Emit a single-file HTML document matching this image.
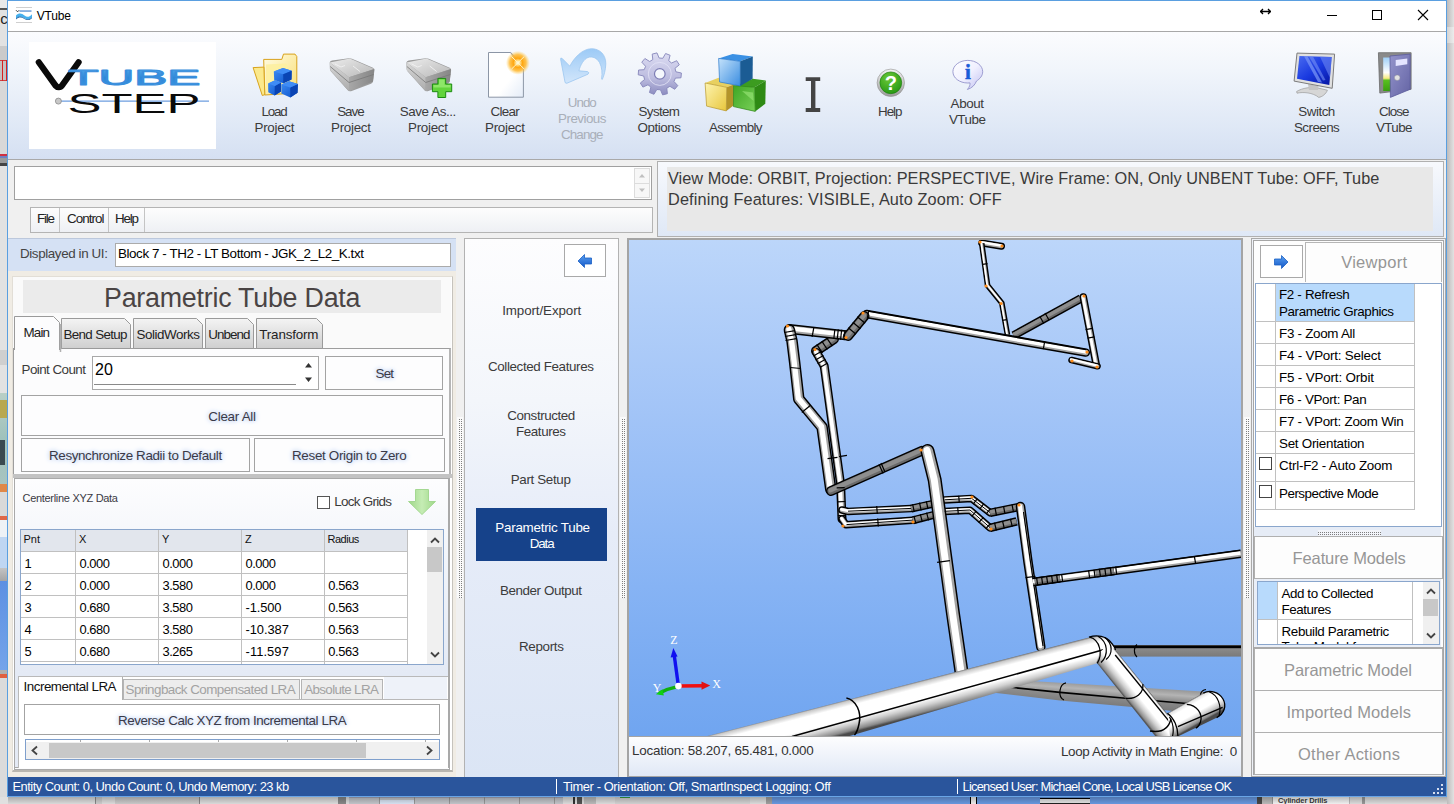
<!DOCTYPE html>
<html lang="en"><head><meta charset="utf-8"><title>VTube</title>
<style>
html,body{margin:0;padding:0;background:#e2e2e2;}
body{width:1454px;height:804px;overflow:hidden;font-family:"Liberation Sans",sans-serif;}
#root{position:relative;width:1454px;height:804px;overflow:hidden;}
.abs{position:absolute;}
.t{position:absolute;white-space:pre;line-height:1;font-family:"Liberation Sans",sans-serif;}
.btn{box-sizing:border-box;border:1px solid #a3a3a3;background:#fdfdfe;}
.hl{height:1px;background:#c0c0c0;}
.vl{width:1px;background:#c0c0c0;}
.dotsv{background-image:radial-gradient(circle,#8e8e8e 0.7px,transparent 0.9px);background-size:2px 2px;}
.dotsh{background-image:radial-gradient(circle,#8e8e8e 0.7px,transparent 0.9px);background-size:2px 2px;}

</style></head>
<body>
<div id="root">
<!-- desktop background strips -->
<div class="abs" style="left:0;top:0;width:1454px;height:804px;background:#e2e2e2"></div>
<div class="abs" style="left:0;top:0;width:8px;height:8px;background:#e9e9e9"></div>
<div class="abs" style="left:0;top:8px;width:8px;height:2px;background:#555"></div>
<span class="t" style="left:-3px;top:11px;font-size:15px;color:#222">ic</span>
<div class="abs" style="left:0;top:46px;width:8px;height:14px;background:#cacaca"></div>
<div class="abs" style="left:0;top:60px;width:8px;height:21px;background:#c6c2c2;border-top:1px solid #d04040;border-bottom:1px solid #d04040;box-sizing:border-box"></div>
<div class="abs" style="left:2px;top:60px;width:1px;height:21px;background:#d82020"></div>
<div class="abs" style="left:6px;top:60px;width:1px;height:21px;background:#d82020"></div>
<div class="abs" style="left:0;top:81px;width:8px;height:73px;background:#d8d8d8"></div>
<div class="abs" style="left:0;top:154px;width:8px;height:2px;background:#d03040"></div>
<div class="abs" style="left:0;top:156px;width:8px;height:2px;background:#7080c0"></div>
<div class="abs" style="left:0;top:158px;width:8px;height:5px;background:#9a9a9a"></div>
<div class="abs" style="left:0;top:163px;width:8px;height:3px;background:#444"></div>
<div class="abs" style="left:0;top:350px;width:8px;height:15px;background:#cfcfcf"></div>
<div class="abs" style="left:0;top:393px;width:8px;height:91px;background:linear-gradient(#b9cfc6,#9fc2bc 50%,#a8c4c0)"></div>
<div class="abs" style="left:0;top:400px;width:8px;height:18px;background:#b8a850"></div>
<div class="abs" style="left:0;top:440px;width:5px;height:25px;background:#3a4a50"></div>
<div class="abs" style="left:0;top:484px;width:8px;height:8px;background:#e08848"></div>
<div class="abs" style="left:0;top:492px;width:8px;height:24px;background:#d9d9d9"></div>
<div class="abs" style="left:0;top:516px;width:8px;height:4px;background:#e06848"></div>
<div class="abs" style="left:0;top:520px;width:8px;height:17px;background:#eef2f6"></div>
<div class="abs" style="left:0;top:537px;width:8px;height:31px;background:#bfd6f2"></div>
<div class="abs" style="left:0;top:568px;width:8px;height:13px;background:linear-gradient(#c4c4c4,#a4a4a4)"></div>
<div class="abs" style="left:0;top:581px;width:8px;height:89px;background:linear-gradient(#5d90e2,#74a4ea)"></div>
<div class="abs" style="left:0;top:670px;width:8px;height:4px;background:#b0b0b0"></div>
<div class="abs" style="left:0;top:674px;width:8px;height:4px;background:#e06040"></div>
<div class="abs" style="left:0;top:678px;width:8px;height:126px;background:#dbdbdb"></div>
<!-- bottom strip -->
<div class="abs" style="left:0;top:797px;width:1454px;height:7px;background:#e0e0e0"></div>
<div class="abs" style="left:95px;top:797px;width:6px;height:7px;background:#d0d0d0;border-left:1px solid #8a8a8a"></div>
<div class="abs" style="left:115px;top:797px;width:84px;height:7px;background:#cdcdcd;border-right:1px solid #8a8a8a"></div>
<div class="abs" style="left:338px;top:797px;width:8px;height:7px;background:#8a8a8a"></div>
<div class="abs" style="left:349px;top:797px;width:214px;height:7px;background:#c6c8cd;border-top:1px solid #aab"></div>
<div class="abs" style="left:379px;top:800px;width:35px;height:4px;background:#dbe6f6"></div>
<div class="abs" style="left:379px;top:797px;width:1px;height:7px;background:#9a9a9a"></div>
<div class="abs" style="left:414px;top:797px;width:1px;height:7px;background:#9a9a9a"></div>
<div class="abs" style="left:449px;top:797px;width:1px;height:7px;background:#9a9a9a"></div>
<div class="abs" style="left:484px;top:797px;width:1px;height:7px;background:#9a9a9a"></div>
<div class="abs" style="left:519px;top:797px;width:1px;height:7px;background:#9a9a9a"></div>
<div class="abs" style="left:554px;top:797px;width:1px;height:7px;background:#9a9a9a"></div>
<div class="abs" style="left:573px;top:797px;width:2px;height:7px;background:#333"></div>
<div class="abs" style="left:577px;top:797px;width:5px;height:7px;background:#555"></div>
<div class="abs" style="left:584px;top:797px;width:12px;height:7px;background:#bdbdbd"></div>
<div class="abs" style="left:615px;top:797px;width:135px;height:7px;background:#d6d6d6"></div>
<div class="abs" style="left:620px;top:797px;width:10px;height:1px;background:#3aa040"></div>
<div class="abs" style="left:766px;top:797px;width:6px;height:7px;background:#a2a2a2"></div>
<div class="abs" style="left:772px;top:797px;width:485px;height:7px;background:#6a9be4"></div>
<div class="abs" style="left:970px;top:797px;width:5px;height:7px;background:#f0f0f0;border-left:1px solid #000;border-right:1px solid #000"></div>
<div class="abs" style="left:1040px;top:798px;width:50px;height:4px;background:#e8e8e8;border-top:1px solid #000;border-bottom:1px solid #222"></div>
<div class="abs" style="left:1257px;top:797px;width:5px;height:7px;background:#4a4a4a"></div>
<div class="abs" style="left:1262px;top:797px;width:10px;height:7px;background:#bdbdbd"></div>
<div class="abs" style="left:1272px;top:797px;width:76px;height:7px;background:#f6f6f6;border-left:1px solid #999;border-right:1px solid #bbb"></div>
<div class="abs" style="left:1362px;top:797px;width:3px;height:7px;background:#9a9a9a"></div>
<span class="t" style="left:1278px;top:796.5px;font-size:7.5px;font-weight:bold;color:#3a3a3a;letter-spacing:-0.1px">Cylinder Drills</span>
<!-- shadows -->
<div class="abs" style="left:8px;top:797px;width:1446px;height:7px;background:linear-gradient(rgba(0,0,0,.24),rgba(0,0,0,.03))"></div>
<div class="abs" style="left:1447px;top:0;width:7px;height:804px;background:linear-gradient(90deg,#bdbbbb,#e2e2e2)"></div>
<div class="abs" style="left:1447px;top:27px;width:7px;height:16px;background:linear-gradient(90deg,#d4d4d4,#ececec)"></div>
<!-- window -->
<div class="abs" id="win" style="left:7px;top:0;width:1440px;height:797px;background:#f0f0f0;box-sizing:border-box;border:1px solid #5a9fe0;border-bottom-color:#6aa5e6"></div>
<!-- title bar -->
<div class="abs" style="left:8px;top:1px;width:1438px;height:30px;background:#fff"></div>
<div class="abs" style="left:8px;top:31px;width:1438px;height:1px;background:#a8a8a8"></div>
<!-- toolbar -->
<div class="abs" style="left:8px;top:32px;width:1438px;height:127px;background:linear-gradient(#fbfcfe 0%,#f1f5fb 30%,#dfe8f6 75%,#d5e0f2 100%)"></div>
<div class="abs" style="left:8px;top:159px;width:1438px;height:1px;background:#a9a9a9"></div>
<!-- logo box -->
<div class="abs" style="left:29px;top:42px;width:187px;height:107px;background:#fff"></div>
<!-- row 2 -->
<div class="abs" style="left:14px;top:166px;width:638px;height:34px;background:#fff;box-sizing:border-box;border:1px solid #a0a0a0"></div>
<div class="abs" style="left:634px;top:168px;width:16px;height:30px;background:#f7f7f7;box-sizing:border-box;border:1px solid #dcdcdc"></div>
<div class="abs" style="left:634px;top:183px;width:16px;height:1px;background:#dcdcdc"></div>
<svg class="abs" style="left:634px;top:168px" width="16" height="30"><path d="M5 9.5L8 6L11 9.5Z M5 20.5L8 24L11 20.5Z" fill="#c0c0c0"/></svg>
<div class="abs" style="left:30px;top:207px;width:623px;height:26px;box-sizing:border-box;border:1px solid #b4b4b4;background:linear-gradient(#fdfdfd,#eef0f4)"></div>
<div class="abs" style="left:59px;top:208px;width:1px;height:24px;background:#c4c4c4"></div>
<div class="abs" style="left:108px;top:208px;width:1px;height:24px;background:#c4c4c4"></div>
<div class="abs" style="left:144px;top:208px;width:1px;height:24px;background:#c4c4c4"></div>
<!-- view mode panel -->
<div class="abs" style="left:657px;top:161px;width:787px;height:76px;box-sizing:border-box;border:1px solid #b0b0b0;background:linear-gradient(#f7f9fd,#dfe8f6)"></div>
<div class="abs" style="left:667px;top:167px;width:766px;height:64px;background:#e8e8e8"></div>
<svg class="abs" style="left:0;top:0" width="0" height="0"><defs><pattern id="dotp" width="2" height="2" patternUnits="userSpaceOnUse"><rect x="0" y="0" width="1" height="1" fill="#7e7e7e"/></pattern></defs></svg>

<!-- LEFT PANEL -->
<div class="abs" style="left:8px;top:238px;width:448px;height:33px;background:#d5e1f4;border-top:1px solid #bcc8dc;box-sizing:border-box"></div>
<div class="abs" style="left:115px;top:243px;width:336px;height:24px;background:#fff;box-sizing:border-box;border:1px solid #ababab"></div>
<!-- beige frame -->
<div class="abs" style="left:8px;top:271px;width:448px;height:506px;background:#f0ece4"></div>
<div class="abs" style="left:12px;top:276px;width:441px;height:496px;background:#fff;box-sizing:border-box;border:1px solid #e2ded6;border-right:1px solid #c6c3bd;border-bottom:2px solid #b9b6b0"></div>
<div class="abs" style="left:13px;top:277px;width:438px;height:197px;background:#fafafa"></div>
<!-- title gray -->
<div class="abs" style="left:23px;top:280px;width:418px;height:33px;background:#ebebeb"></div>
<!-- tabs -->
<div class="abs" style="left:13px;top:348px;width:438px;height:127px;box-sizing:border-box;border:1px solid #9d9d9d;border-right:2px solid #b5b5b5;border-bottom:0;background:#fcfcfd"></div>
<svg class="abs" style="left:0;top:0" width="470" height="360">
  <defs><linearGradient id="tabg" x1="0" y1="0" x2="0" y2="1"><stop offset="0" stop-color="#f4f4f4"/><stop offset="1" stop-color="#cfcfcf"/></linearGradient></defs>
  <path d="M61.5 348.5V318.5H124.5L130.5 324.5V348.5Z" fill="url(#tabg)" stroke="#9a9a9a"/>
  <path d="M133.5 348.5V318.5H196.5L202.5 324.5V348.5Z" fill="url(#tabg)" stroke="#9a9a9a"/>
  <path d="M205.5 348.5V318.5H247.5L253.5 324.5V348.5Z" fill="url(#tabg)" stroke="#9a9a9a"/>
  <path d="M256.5 348.5V318.5H316.5L322.5 324.5V348.5Z" fill="url(#tabg)" stroke="#9a9a9a"/>
  <path d="M14.5 350V316.5H53.5L59.5 322.5V350" fill="#fcfcfd" stroke="#9a9a9a"/>
  <path d="M60.5 324V352" stroke="#b0b0b0" stroke-width="1.5" fill="none"/>
</svg>
<!-- point count -->
<div class="abs" style="left:92px;top:356px;width:227px;height:34px;box-sizing:border-box;border:1px solid #a8a8a8;background:#fff"></div>
<div class="abs" style="left:94px;top:384px;width:202px;height:1px;background:#8a8a8a"></div>
<svg class="abs" style="left:300px;top:358px" width="18" height="30"><path d="M5 9.5L8.5 5L12 9.5Z M5 19.5L8.5 24L12 19.5Z" fill="#333"/></svg>
<div class="abs btn" style="left:325px;top:356px;width:118px;height:34px"></div>
<div class="abs btn" style="left:21px;top:395px;width:422px;height:41px"></div>
<div class="abs btn" style="left:21px;top:438px;width:229px;height:34px"></div>
<div class="abs btn" style="left:254px;top:438px;width:191px;height:34px"></div>
<!-- gray separator -->
<div class="abs" style="left:13px;top:474px;width:439px;height:4px;background:#c3c3c3"></div>
<!-- centerline panel -->
<div class="abs" style="left:14px;top:478px;width:436px;height:292px;box-sizing:border-box;border:1px solid #a9a9a9;border-right:2px solid #a9a9a9;border-bottom:3px double #a9a9a9;background:linear-gradient(#fdfdfe 0px,#eef2f9 110px,#e4eaf5 195px,#e4eaf5 100%)"></div>
<!-- checkbox + arrow -->
<div class="abs" style="left:317px;top:496px;width:13px;height:13px;box-sizing:border-box;border:1px solid #555;background:#fff"></div>
<svg class="abs" style="left:406px;top:487px" width="32" height="30"><defs><linearGradient id="ga" x1="0" y1="0" x2="1" y2="0"><stop offset="0" stop-color="#9fd888"/><stop offset="0.5" stop-color="#c5ecb4"/><stop offset="1" stop-color="#9fd888"/></linearGradient></defs><path d="M9.5 2.5H22.5V14.5H29.5L16 27.5L2.5 14.5H9.5Z" fill="url(#ga)" stroke="#a4d892" stroke-width="1"/></svg>
<!-- grid -->
<div class="abs" style="left:20px;top:529px;width:424px;height:136px;box-sizing:border-box;border:1px solid #8aa6cc;background:#fff"></div>
<div class="abs" style="left:21px;top:530px;width:387px;height:21px;background:#e2e6ed"></div>
<!-- grid lines -->
<div class="abs hl" style="left:21px;top:551px;width:387px"></div>
<div class="abs hl" style="left:21px;top:573px;width:387px"></div>
<div class="abs hl" style="left:21px;top:595px;width:387px"></div>
<div class="abs hl" style="left:21px;top:617px;width:387px"></div>
<div class="abs hl" style="left:21px;top:639px;width:387px"></div>
<div class="abs hl" style="left:21px;top:661px;width:387px"></div>
<div class="abs vl" style="left:75px;top:530px;height:134px"></div>
<div class="abs vl" style="left:158px;top:530px;height:134px"></div>
<div class="abs vl" style="left:241px;top:530px;height:134px"></div>
<div class="abs vl" style="left:324px;top:530px;height:134px"></div>
<div class="abs vl" style="left:407px;top:530px;height:134px"></div>
<!-- v scrollbar -->
<div class="abs" style="left:427px;top:530px;width:16px;height:134px;background:#f0f0f0"></div>
<div class="abs" style="left:427px;top:547px;width:15px;height:25px;background:#c8c8c8"></div>
<svg class="abs" style="left:427px;top:530px" width="16" height="134"><path d="M4 12.5L8 8.5L12 12.5" stroke="#444" stroke-width="1.8" fill="none"/><path d="M4 122.5L8 126.5L12 122.5" stroke="#444" stroke-width="1.8" fill="none"/></svg>
<!-- LRA tabs -->
<div class="abs" style="left:18px;top:676px;width:430px;height:92px;background:#fff;border-top:1px solid #b9b9b9;border-left:1px solid #b9b9b9;box-sizing:border-box"></div>
<div class="abs" style="left:123px;top:679px;width:177px;height:21px;box-sizing:border-box;border:1px solid #b4b4b4;background:#ededed"></div>
<div class="abs" style="left:301px;top:679px;width:82px;height:21px;box-sizing:border-box;border:1px solid #b4b4b4;background:#ededed"></div>
<div class="abs" style="left:122px;top:699px;width:326px;height:1px;background:#b9b9b9"></div>
<div class="abs" style="left:122px;top:677px;width:1px;height:23px;background:#b0b0b0"></div>
<div class="abs" style="left:384px;top:677px;width:63px;height:22px;background:#eef2f9"></div>
<div class="abs btn" style="left:24px;top:704px;width:416px;height:31px;background:#fff"></div>
<!-- bottom grid -->
<div class="abs" style="left:25px;top:739px;width:415px;height:21px;box-sizing:border-box;border:1px solid #7f9fcc;background:#f0f0f0"></div>
<div class="abs" style="left:26px;top:740px;width:413px;height:2px;background:#fff"></div>
<div class="abs" style="left:80px;top:740px;width:1px;height:2px;background:#aaa"></div>
<div class="abs" style="left:149px;top:740px;width:1px;height:2px;background:#aaa"></div>
<div class="abs" style="left:218px;top:740px;width:1px;height:2px;background:#aaa"></div>
<div class="abs" style="left:287px;top:740px;width:1px;height:2px;background:#aaa"></div>
<div class="abs" style="left:356px;top:740px;width:1px;height:2px;background:#aaa"></div>
<div class="abs" style="left:425px;top:740px;width:1px;height:2px;background:#aaa"></div>
<div class="abs" style="left:49px;top:743px;width:317px;height:15px;background:#c8c8c8"></div>
<svg class="abs" style="left:26px;top:742px" width="413" height="17"><path d="M11 4.5L6.5 8.5L11 12.5" stroke="#444" stroke-width="1.8" fill="none"/><path d="M401 4.5L405.5 8.5L401 12.5" stroke="#444" stroke-width="1.8" fill="none"/></svg>
<!-- splitter dots left -->
<svg class="abs" style="left:457px;top:417px" width="6" height="181"><rect width="6" height="181" fill="#fafafa"/><rect x="1" y="1" width="4" height="180" fill="url(#dotp)"/></svg>

<!-- NAV PANEL -->
<div class="abs" style="left:464px;top:238px;width:155px;height:539px;box-sizing:border-box;border:1px solid #b2b2b2;border-bottom:0;background:linear-gradient(#fdfdfe 0%,#f3f6fb 30%,#e6ecf8 55%,#dbe5f5 100%)"></div>
<div class="abs" style="left:564px;top:244px;width:42px;height:33px;box-sizing:border-box;border:1px solid #a9a9a9;background:#fff"></div>
<svg class="abs" style="left:576px;top:252px" width="18" height="18"><defs><linearGradient id="bl" x1="0" y1="0" x2="0" y2="1"><stop offset="0" stop-color="#5aa0f0"/><stop offset="1" stop-color="#1458c8"/></linearGradient></defs><path d="M2 9L8.5 2.5V6H15.5V12H8.5V15.5Z" fill="url(#bl)" stroke="#1a5fc4" stroke-width="0.8"/></svg>
<div class="abs" style="left:476px;top:508px;width:131px;height:53px;background:#16428a"></div>
<svg class="abs" style="left:620px;top:417px" width="6" height="181"><rect width="6" height="181" fill="#fafafa"/><rect x="1" y="1" width="4" height="180" fill="url(#dotp)"/></svg>

<!-- VIEWPORT FRAME -->
<div class="abs" style="left:627px;top:238px;width:616px;height:539px;background:#a4a4a4"></div>
<div class="abs" id="vp" style="left:629px;top:240px;width:612px;height:496px;background:linear-gradient(#bcd6fa 0%,#a2c4f7 35%,#86b3f4 70%,#70a5f0 100%)"></div>
<div class="abs" style="left:629px;top:737px;width:612px;height:39px;background:linear-gradient(#fdfdfe,#e0e8f6)"></div>
<!-- RIGHT PANEL -->
<div class="abs" style="left:1251px;top:238px;width:195px;height:539px;box-sizing:border-box;border:1px solid #a9a9a9;background:#eef1f7"></div>
<div class="abs" style="left:1253px;top:240px;width:191px;height:535px;box-sizing:border-box;border:1px solid #a6a6a6;background:#fdfdfd"></div>
<!-- arrow button -->
<div class="abs" style="left:1260px;top:245px;width:43px;height:33px;box-sizing:border-box;border:1px solid #a9a9a9;background:#fff"></div>
<svg class="abs" style="left:1272px;top:253px" width="18" height="18"><path d="M16 9L9.5 2.5V6H2.5V12H9.5V15.5Z" fill="url(#bl)" stroke="#1a5fc4" stroke-width="0.8"/></svg>
<!-- viewport header -->
<div class="abs" style="left:1305px;top:242px;width:137px;height:40px;box-sizing:border-box;border:1px solid #b6b6b6;border-bottom:0;background:#fdfdfd"></div>
<!-- list 1 -->
<div class="abs" style="left:1255px;top:283px;width:187px;height:244px;box-sizing:border-box;border:1px solid #8aa6cc;background:#fff"></div>
<div class="abs" style="left:1276px;top:284px;width:138px;height:37px;background:#b8dafc"></div>
<div class="abs hl" style="left:1256px;top:321px;width:159px"></div>
<div class="abs hl" style="left:1256px;top:343px;width:159px"></div>
<div class="abs hl" style="left:1256px;top:365px;width:159px"></div>
<div class="abs hl" style="left:1256px;top:387px;width:159px"></div>
<div class="abs hl" style="left:1256px;top:409px;width:159px"></div>
<div class="abs hl" style="left:1256px;top:431px;width:159px"></div>
<div class="abs hl" style="left:1256px;top:453px;width:159px"></div>
<div class="abs hl" style="left:1256px;top:481px;width:159px"></div>
<div class="abs hl" style="left:1256px;top:509px;width:159px"></div>
<div class="abs vl" style="left:1275px;top:284px;height:226px"></div>
<div class="abs vl" style="left:1414px;top:284px;height:226px"></div>
<div class="abs" style="left:1259px;top:457px;width:13px;height:13px;box-sizing:border-box;border:1px solid #444;background:#fff"></div>
<div class="abs" style="left:1259px;top:485px;width:13px;height:13px;box-sizing:border-box;border:1px solid #444;background:#fff"></div>
<!-- splitter -->
<div class="abs" style="left:1254px;top:527px;width:187px;height:10px;background:#e6ecf6"></div>
<svg class="abs" style="left:1318px;top:530px" width="63" height="6"><rect width="63" height="6" fill="#f3f5fa"/><rect x="0" y="1" width="63" height="4" fill="url(#dotp)"/></svg>
<!-- Feature models header -->
<div class="abs" style="left:1254px;top:536px;width:189px;height:43px;box-sizing:border-box;border:1px solid #b0b0b0;background:#fdfdfd"></div>
<div class="abs" style="left:1254px;top:579px;width:187px;height:69px;background:#e9eef7"></div>
<div class="abs" style="left:1257px;top:581px;width:183px;height:64px;box-sizing:border-box;border:1px solid #8aa6cc;background:#fff"></div>
<div class="abs" style="left:1258px;top:582px;width:19px;height:37px;background:#b8dafc"></div>
<div class="abs hl" style="left:1258px;top:619px;width:155px"></div>
<div class="abs" style="left:1278px;top:636px;width:134px;height:8px;overflow:hidden"><span class="t" style="left:3.5px;top:4px;font-size:13.4px;letter-spacing:-0.3px;color:#000">Tube Model from</span></div>
<div class="abs vl" style="left:1277px;top:582px;height:62px"></div>
<div class="abs vl" style="left:1412px;top:582px;height:62px"></div>
<div class="abs" style="left:1423px;top:582px;width:16px;height:62px;background:#f0f0f0"></div>
<div class="abs" style="left:1423px;top:599px;width:15px;height:17px;background:#c8c8c8"></div>
<svg class="abs" style="left:1423px;top:582px" width="16" height="62"><path d="M4 11.5L8 7.5L12 11.5" stroke="#444" stroke-width="1.8" fill="none"/><path d="M4 51.5L8 55.5L12 51.5" stroke="#444" stroke-width="1.8" fill="none"/></svg>
<!-- collapsed headers -->
<div class="abs" style="left:1254px;top:647px;width:189px;height:44px;box-sizing:border-box;border:1px solid #b0b0b0;border-top:2px solid #a9a9a9;background:#fdfdfd"></div>
<div class="abs" style="left:1254px;top:690px;width:189px;height:43px;box-sizing:border-box;border:1px solid #b0b0b0;background:#fdfdfd"></div>
<div class="abs" style="left:1254px;top:732px;width:189px;height:43px;box-sizing:border-box;border:1px solid #b0b0b0;background:#fdfdfd"></div>
<svg class="abs" style="left:1244px;top:417px" width="6" height="181"><rect width="6" height="181" fill="#fafafa"/><rect x="1" y="1" width="4" height="180" fill="url(#dotp)"/></svg>
<!-- STATUS BAR -->
<div class="abs" style="left:8px;top:777px;width:1438px;height:19px;background:#2a559c"></div>
<div class="abs" style="left:556px;top:779px;width:1px;height:15px;background:#fff"></div>
<div class="abs" style="left:957px;top:779px;width:1px;height:15px;background:#fff"></div>
<svg class="abs" style="left:1432px;top:783px" width="12" height="12"><g fill="#d5def0"><rect x="9" y="1" width="2" height="2"/><rect x="5" y="5" width="2" height="2"/><rect x="9" y="5" width="2" height="2"/><rect x="1" y="9" width="2" height="2"/><rect x="5" y="9" width="2" height="2"/><rect x="9" y="9" width="2" height="2"/></g></svg>

<svg class="abs" style="left:629px;top:240px" width="612" height="496" viewBox="629 240 612 496" shape-rendering="auto">
<defs>
<linearGradient id="gB1" gradientUnits="userSpaceOnUse" x1="900" y1="686.1" x2="908.2" y2="718.1">
 <stop offset="0" stop-color="#777"/><stop offset="0.05" stop-color="#c9c9c9"/><stop offset="0.2" stop-color="#fff"/><stop offset="0.58" stop-color="#fff"/><stop offset="0.75" stop-color="#d0d0d0"/><stop offset="0.93" stop-color="#8a8a8a"/><stop offset="1" stop-color="#4a4a4a"/>
</linearGradient>
<linearGradient id="gB2" gradientUnits="userSpaceOnUse" x1="1143.2" y1="684.2" x2="1125.8" y2="698.3">
 <stop offset="0" stop-color="#555"/><stop offset="0.06" stop-color="#f4f4f4"/><stop offset="0.2" stop-color="#fff"/><stop offset="0.5" stop-color="#fff"/><stop offset="0.72" stop-color="#cfcfcf"/><stop offset="0.93" stop-color="#8e8e8e"/><stop offset="1" stop-color="#555"/>
</linearGradient>
<linearGradient id="gB3" gradientUnits="userSpaceOnUse" x1="1185" y1="703.2" x2="1197.1" y2="724.7">
 <stop offset="0" stop-color="#666"/><stop offset="0.06" stop-color="#e6e6e6"/><stop offset="0.2" stop-color="#fff"/><stop offset="0.55" stop-color="#fff"/><stop offset="0.75" stop-color="#cdcdcd"/><stop offset="0.93" stop-color="#8a8a8a"/><stop offset="1" stop-color="#4a4a4a"/>
</linearGradient>
<linearGradient id="gG1" x1="0" y1="0" x2="0" y2="1">
 <stop offset="0" stop-color="#7c7c7c"/><stop offset="0.08" stop-color="#000"/><stop offset="0.27" stop-color="#000"/><stop offset="0.31" stop-color="#8a8a8a"/><stop offset="1" stop-color="#7a7a7a"/>
</linearGradient>
<linearGradient id="gG2" gradientUnits="userSpaceOnUse" x1="1100" y1="685" x2="1098.6" y2="705">
 <stop offset="0" stop-color="#9a9a9a"/><stop offset="0.25" stop-color="#b4b4b4"/><stop offset="0.55" stop-color="#8c8c8c"/><stop offset="1" stop-color="#7a7a7a"/>
</linearGradient>
</defs>


<!-- gray horizontal pipe G1 -->
<rect x="1113" y="645" width="129" height="11.6" fill="url(#gG1)"/>
<path d="M1137 644.5C1133.5 647 1133.5 654 1137 657" fill="none" stroke="#000" stroke-width="1.1"/>
<!-- gray lower pipe G2 -->
<path d="M1031 681L1203.2 691.6L1214 699L1192 713L1143.5 708L1060 700.6L990 692.2Z" fill="url(#gG2)"/>
<path d="M1000 686.2L1060 692.4L1125.6 698.3L1186.8 703.5" fill="none" stroke="#000" stroke-width="1.6"/>
<path d="M1066 682.8C1059 684 1057.5 697.5 1064 700" fill="none" stroke="#000" stroke-width="1.2"/>
<path d="M1206 689.5C1200 690.5 1199 697 1202 700" fill="none" stroke="#000" stroke-width="1.2"/>
<!-- thin vertical pipe in front of G? drawn earlier -->

<polyline points="981.7,243.0 1001.5,246.2" fill="none" stroke="#000" stroke-width="7.0" stroke-linecap="round" stroke-linejoin="round"/>
<polyline points="981.7,243.0 1001.5,246.2" fill="none" stroke="#a4a4a4" stroke-width="4.1" stroke-linecap="round" stroke-linejoin="round"/>
<polyline points="981.7,243.0 1001.5,246.2" fill="none" stroke="#ffffff" stroke-width="2.5" stroke-linecap="round" stroke-linejoin="round" transform="translate(-0.5,-0.7)"/>
<polyline points="981.7,243.4 987.6,285.4 1001.8,303.0 1007.5,335.0" fill="none" stroke="#000" stroke-width="5.6" stroke-linecap="butt" stroke-linejoin="round"/>
<polyline points="981.7,243.4 987.6,285.4 1001.8,303.0 1007.5,335.0" fill="none" stroke="#a4a4a4" stroke-width="2.7" stroke-linecap="butt" stroke-linejoin="round"/>
<polyline points="981.7,243.4 987.6,285.4 1001.8,303.0 1007.5,335.0" fill="none" stroke="#ffffff" stroke-width="1.7" stroke-linecap="butt" stroke-linejoin="round" transform="translate(-0.5,-0.7)"/>
<polyline points="1013.6,335.5 1080.8,298.5" fill="none" stroke="#000" stroke-width="8.5" stroke-linecap="butt" stroke-linejoin="round"/>
<polyline points="1013.6,335.5 1080.8,298.5" fill="none" stroke="#6a6a6a" stroke-width="5.6" stroke-linecap="butt" stroke-linejoin="round"/>
<polyline points="1013.6,335.5 1080.8,298.5" fill="none" stroke="#8e8e8e" stroke-width="3.5" stroke-linecap="butt" stroke-linejoin="round" transform="translate(-0.5,-0.7)"/>
<polyline points="866.5,314.0 1085.8,352.6" fill="none" stroke="#000" stroke-width="8.5" stroke-linecap="round" stroke-linejoin="round"/>
<polyline points="866.5,314.0 1085.8,352.6" fill="none" stroke="#a4a4a4" stroke-width="5.6" stroke-linecap="round" stroke-linejoin="round"/>
<polyline points="866.5,314.0 1085.8,352.6" fill="none" stroke="#ffffff" stroke-width="3.5" stroke-linecap="round" stroke-linejoin="round" transform="translate(-0.5,-0.7)"/>
<polyline points="1083.3,297.0 1096.2,364.5" fill="none" stroke="#000" stroke-width="7.5" stroke-linecap="round" stroke-linejoin="round"/>
<polyline points="1083.3,297.0 1096.2,364.5" fill="none" stroke="#a4a4a4" stroke-width="4.6" stroke-linecap="round" stroke-linejoin="round"/>
<polyline points="1083.3,297.0 1096.2,364.5" fill="none" stroke="#ffffff" stroke-width="2.9" stroke-linecap="round" stroke-linejoin="round" transform="translate(-0.5,-0.7)"/>
<polyline points="1071.5,360.0 1097.6,366.3" fill="none" stroke="#000" stroke-width="6.5" stroke-linecap="round" stroke-linejoin="round"/>
<polyline points="1071.5,360.0 1097.6,366.3" fill="none" stroke="#a4a4a4" stroke-width="3.6" stroke-linecap="round" stroke-linejoin="round"/>
<polyline points="1071.5,360.0 1097.6,366.3" fill="none" stroke="#ffffff" stroke-width="2.2" stroke-linecap="round" stroke-linejoin="round" transform="translate(-0.5,-0.7)"/>
<polyline points="834.0,339.0 816.0,351.0" fill="none" stroke="#000" stroke-width="10.0" stroke-linecap="round" stroke-linejoin="round"/>
<polyline points="834.0,339.0 816.0,351.0" fill="none" stroke="#6a6a6a" stroke-width="7.1" stroke-linecap="round" stroke-linejoin="round"/>
<polyline points="834.0,339.0 816.0,351.0" fill="none" stroke="#8e8e8e" stroke-width="4.4" stroke-linecap="round" stroke-linejoin="round" transform="translate(-0.5,-0.7)"/>
<polyline points="789.4,329.0 845.6,335.3" fill="none" stroke="#000" stroke-width="10.0" stroke-linecap="round" stroke-linejoin="round"/>
<polyline points="789.4,329.0 845.6,335.3" fill="none" stroke="#a4a4a4" stroke-width="7.1" stroke-linecap="round" stroke-linejoin="round"/>
<polyline points="789.4,329.0 845.6,335.3" fill="none" stroke="#ffffff" stroke-width="4.4" stroke-linecap="round" stroke-linejoin="round" transform="translate(-0.5,-0.7)"/>
<polyline points="848.0,336.0 864.5,316.0" fill="none" stroke="#000" stroke-width="10.0" stroke-linecap="round" stroke-linejoin="round"/>
<polyline points="848.0,336.0 864.5,316.0" fill="none" stroke="#6a6a6a" stroke-width="7.1" stroke-linecap="round" stroke-linejoin="round"/>
<polyline points="848.0,336.0 864.5,316.0" fill="none" stroke="#8e8e8e" stroke-width="4.4" stroke-linecap="round" stroke-linejoin="round" transform="translate(-0.5,-0.7)"/>
<polyline points="816.5,352.5 824.2,366.0 840.6,484.3 842.0,519.0" fill="none" stroke="#000" stroke-width="9.0" stroke-linecap="round" stroke-linejoin="round"/>
<polyline points="816.5,352.5 824.2,366.0 840.6,484.3 842.0,519.0" fill="none" stroke="#a4a4a4" stroke-width="6.1" stroke-linecap="round" stroke-linejoin="round"/>
<polyline points="816.5,352.5 824.2,366.0 840.6,484.3 842.0,519.0" fill="none" stroke="#ffffff" stroke-width="3.8" stroke-linecap="round" stroke-linejoin="round" transform="translate(-0.5,-0.7)"/>
<polyline points="789.4,330.0 792.0,341.0 794.6,362.0 798.8,399.0 822.1,427.2 830.8,489.5" fill="none" stroke="#000" stroke-width="11.5" stroke-linecap="round" stroke-linejoin="round"/>
<polyline points="789.4,330.0 792.0,341.0 794.6,362.0 798.8,399.0 822.1,427.2 830.8,489.5" fill="none" stroke="#a4a4a4" stroke-width="8.6" stroke-linecap="round" stroke-linejoin="round"/>
<polyline points="789.4,330.0 792.0,341.0 794.6,362.0 798.8,399.0 822.1,427.2 830.8,489.5" fill="none" stroke="#ffffff" stroke-width="5.3" stroke-linecap="round" stroke-linejoin="round" transform="translate(-0.5,-0.7)"/>
<polyline points="831.0,491.0 922.0,450.8" fill="none" stroke="#000" stroke-width="10.0" stroke-linecap="round" stroke-linejoin="round"/>
<polyline points="831.0,491.0 922.0,450.8" fill="none" stroke="#6a6a6a" stroke-width="7.1" stroke-linecap="round" stroke-linejoin="round"/>
<polyline points="831.0,491.0 922.0,450.8" fill="none" stroke="#8e8e8e" stroke-width="4.4" stroke-linecap="round" stroke-linejoin="round" transform="translate(-0.5,-0.7)"/>
<polyline points="842.0,510.0 848.0,511.4 911.2,508.6" fill="none" stroke="#000" stroke-width="7.5" stroke-linecap="round" stroke-linejoin="round"/>
<polyline points="842.0,510.0 848.0,511.4 911.2,508.6" fill="none" stroke="#a4a4a4" stroke-width="4.6" stroke-linecap="round" stroke-linejoin="round"/>
<polyline points="842.0,510.0 848.0,511.4 911.2,508.6" fill="none" stroke="#ffffff" stroke-width="2.9" stroke-linecap="round" stroke-linejoin="round" transform="translate(-0.5,-0.7)"/>
<polyline points="842.0,519.0 846.0,524.8 912.8,520.3" fill="none" stroke="#000" stroke-width="7.5" stroke-linecap="round" stroke-linejoin="round"/>
<polyline points="842.0,519.0 846.0,524.8 912.8,520.3" fill="none" stroke="#a4a4a4" stroke-width="4.6" stroke-linecap="round" stroke-linejoin="round"/>
<polyline points="842.0,519.0 846.0,524.8 912.8,520.3" fill="none" stroke="#ffffff" stroke-width="2.9" stroke-linecap="round" stroke-linejoin="round" transform="translate(-0.5,-0.7)"/>
<polyline points="911.2,508.6 934.0,503.6" fill="none" stroke="#000" stroke-width="8.0" stroke-linecap="butt" stroke-linejoin="round"/>
<polyline points="911.2,508.6 934.0,503.6" fill="none" stroke="#6a6a6a" stroke-width="5.1" stroke-linecap="butt" stroke-linejoin="round"/>
<polyline points="911.2,508.6 934.0,503.6" fill="none" stroke="#8e8e8e" stroke-width="3.2" stroke-linecap="butt" stroke-linejoin="round" transform="translate(-0.5,-0.7)"/>
<polyline points="912.8,520.3 934.0,514.8" fill="none" stroke="#000" stroke-width="8.0" stroke-linecap="butt" stroke-linejoin="round"/>
<polyline points="912.8,520.3 934.0,514.8" fill="none" stroke="#6a6a6a" stroke-width="5.1" stroke-linecap="butt" stroke-linejoin="round"/>
<polyline points="912.8,520.3 934.0,514.8" fill="none" stroke="#8e8e8e" stroke-width="3.2" stroke-linecap="butt" stroke-linejoin="round" transform="translate(-0.5,-0.7)"/>
<polyline points="944.7,500.0 971.6,498.5 990.1,512.8" fill="none" stroke="#000" stroke-width="7.5" stroke-linecap="round" stroke-linejoin="round"/>
<polyline points="944.7,500.0 971.6,498.5 990.1,512.8" fill="none" stroke="#a4a4a4" stroke-width="4.6" stroke-linecap="round" stroke-linejoin="round"/>
<polyline points="944.7,500.0 971.6,498.5 990.1,512.8" fill="none" stroke="#ffffff" stroke-width="2.9" stroke-linecap="round" stroke-linejoin="round" transform="translate(-0.5,-0.7)"/>
<polyline points="944.7,511.5 970.0,510.2 990.1,527.9" fill="none" stroke="#000" stroke-width="7.5" stroke-linecap="round" stroke-linejoin="round"/>
<polyline points="944.7,511.5 970.0,510.2 990.1,527.9" fill="none" stroke="#a4a4a4" stroke-width="4.6" stroke-linecap="round" stroke-linejoin="round"/>
<polyline points="944.7,511.5 970.0,510.2 990.1,527.9" fill="none" stroke="#ffffff" stroke-width="2.9" stroke-linecap="round" stroke-linejoin="round" transform="translate(-0.5,-0.7)"/>
<polyline points="990.1,512.8 1018.4,507.1" fill="none" stroke="#000" stroke-width="8.5" stroke-linecap="butt" stroke-linejoin="round"/>
<polyline points="990.1,512.8 1018.4,507.1" fill="none" stroke="#6a6a6a" stroke-width="5.6" stroke-linecap="butt" stroke-linejoin="round"/>
<polyline points="990.1,512.8 1018.4,507.1" fill="none" stroke="#8e8e8e" stroke-width="3.5" stroke-linecap="butt" stroke-linejoin="round" transform="translate(-0.5,-0.7)"/>
<polyline points="990.1,527.9 1016.7,521.4" fill="none" stroke="#000" stroke-width="8.5" stroke-linecap="butt" stroke-linejoin="round"/>
<polyline points="990.1,527.9 1016.7,521.4" fill="none" stroke="#6a6a6a" stroke-width="5.6" stroke-linecap="butt" stroke-linejoin="round"/>
<polyline points="990.1,527.9 1016.7,521.4" fill="none" stroke="#8e8e8e" stroke-width="3.5" stroke-linecap="butt" stroke-linejoin="round" transform="translate(-0.5,-0.7)"/>
<polyline points="1020.5,506.5 1028.0,562.0 1040.8,647.0" fill="none" stroke="#000" stroke-width="9.5" stroke-linecap="round" stroke-linejoin="round"/>
<polyline points="1020.5,506.5 1028.0,562.0 1040.8,647.0" fill="none" stroke="#a4a4a4" stroke-width="6.6" stroke-linecap="round" stroke-linejoin="round"/>
<polyline points="1020.5,506.5 1028.0,562.0 1040.8,647.0" fill="none" stroke="#ffffff" stroke-width="4.1" stroke-linecap="round" stroke-linejoin="round" transform="translate(-0.5,-0.7)"/>
<polyline points="1023.5,512 1030.5,562 1043,646" fill="none" stroke="#000" stroke-width="1.1"/>
<polyline points="1033.0,582.0 1241.0,553.6" fill="none" stroke="#000" stroke-width="8.5" stroke-linecap="butt" stroke-linejoin="round"/>
<polyline points="1033.0,582.0 1241.0,553.6" fill="none" stroke="#a4a4a4" stroke-width="5.6" stroke-linecap="butt" stroke-linejoin="round"/>
<polyline points="1033.0,582.0 1241.0,553.6" fill="none" stroke="#ffffff" stroke-width="3.5" stroke-linecap="butt" stroke-linejoin="round" transform="translate(-0.5,-0.7)"/>
<polyline points="1035.0,581.7 1060.0,578.3" fill="none" stroke="#000" stroke-width="8.5" stroke-linecap="butt" stroke-linejoin="round"/>
<polyline points="1035.0,581.7 1060.0,578.3" fill="none" stroke="#6a6a6a" stroke-width="5.6" stroke-linecap="butt" stroke-linejoin="round"/>
<polyline points="1035.0,581.7 1060.0,578.3" fill="none" stroke="#8e8e8e" stroke-width="3.5" stroke-linecap="butt" stroke-linejoin="round" transform="translate(-0.5,-0.7)"/>
<polyline points="1096.0,573.4 1114.0,571.0" fill="none" stroke="#000" stroke-width="8.5" stroke-linecap="butt" stroke-linejoin="round"/>
<polyline points="1096.0,573.4 1114.0,571.0" fill="none" stroke="#6a6a6a" stroke-width="5.6" stroke-linecap="butt" stroke-linejoin="round"/>
<polyline points="1096.0,573.4 1114.0,571.0" fill="none" stroke="#8e8e8e" stroke-width="3.5" stroke-linecap="butt" stroke-linejoin="round" transform="translate(-0.5,-0.7)"/>
<polyline points="927.5,451.0 934.7,480.0 953.1,614.4 961.5,672.0" fill="none" stroke="#000" stroke-width="14.0" stroke-linecap="round" stroke-linejoin="round"/>
<polyline points="927.5,451.0 934.7,480.0 953.1,614.4 961.5,672.0" fill="none" stroke="#a4a4a4" stroke-width="11.1" stroke-linecap="round" stroke-linejoin="round"/>
<polyline points="927.5,451.0 934.7,480.0 953.1,614.4 961.5,672.0" fill="none" stroke="#ffffff" stroke-width="6.9" stroke-linecap="round" stroke-linejoin="round" transform="translate(-0.5,-0.7)"/>
<line x1="813.9" y1="327.1" x2="812.1" y2="336.9" stroke="#000" stroke-width="1.2"/>
<line x1="868.8" y1="310.1" x2="867.2" y2="318.9" stroke="#000" stroke-width="1.2"/>
<line x1="1044.7" y1="341.4" x2="1043.3" y2="349.2" stroke="#000" stroke-width="1.2"/>
<line x1="790.0" y1="367.5" x2="801.0" y2="368.5" stroke="#000" stroke-width="1.2"/>
<line x1="801.8" y1="412.5" x2="810.2" y2="405.5" stroke="#000" stroke-width="1.2"/>
<line x1="827.5" y1="458.7" x2="837.5" y2="457.3" stroke="#000" stroke-width="1.2"/>
<line x1="839.0" y1="456.6" x2="847.0" y2="455.4" stroke="#000" stroke-width="1.2"/>
<line x1="881.0" y1="462.9" x2="885.0" y2="472.1" stroke="#000" stroke-width="1.2"/>
<line x1="876.7" y1="506.0" x2="877.3" y2="514.0" stroke="#000" stroke-width="1.2"/>
<line x1="877.7" y1="518.5" x2="878.3" y2="526.5" stroke="#000" stroke-width="1.2"/>
<line x1="958.7" y1="495.8" x2="959.3" y2="502.8" stroke="#000" stroke-width="1.2"/>
<line x1="957.7" y1="507.3" x2="958.3" y2="514.3" stroke="#000" stroke-width="1.2"/>
<line x1="1085.6" y1="329.6" x2="1092.4" y2="328.4" stroke="#000" stroke-width="1.2"/>
<line x1="1045.0" y1="313.0" x2="1049.0" y2="320.0" stroke="#000" stroke-width="1.2"/>
<line x1="937.1" y1="562.4" x2="949.9" y2="560.6" stroke="#000" stroke-width="1.2"/>
<line x1="1025.5" y1="577.7" x2="1035.5" y2="576.3" stroke="#000" stroke-width="1.2"/>
<line x1="1194.3" y1="556.1" x2="1195.7" y2="563.9" stroke="#000" stroke-width="1.2"/>
<line x1="982.5" y1="264.3" x2="987.5" y2="263.7" stroke="#000" stroke-width="1.2"/>
<line x1="1002.0" y1="320.3" x2="1007.0" y2="319.7" stroke="#000" stroke-width="1.2"/>
<line x1="834.9" y1="329.1" x2="833.8" y2="339.0" stroke="#000" stroke-width="1.2"/>
<line x1="838.3" y1="329.4" x2="837.2" y2="339.4" stroke="#000" stroke-width="1.2"/>
<line x1="841.7" y1="329.8" x2="840.5" y2="339.8" stroke="#000" stroke-width="1.2"/>
<line x1="845.0" y1="330.2" x2="843.9" y2="340.1" stroke="#000" stroke-width="1.2"/>
<line x1="848.3" y1="327.8" x2="856.0" y2="334.2" stroke="#000" stroke-width="1.2"/>
<line x1="852.8" y1="322.3" x2="860.5" y2="328.7" stroke="#000" stroke-width="1.2"/>
<line x1="857.3" y1="316.8" x2="865.1" y2="323.2" stroke="#000" stroke-width="1.2"/>
<line x1="832.3" y1="346.2" x2="826.7" y2="337.8" stroke="#000" stroke-width="1.2"/>
<line x1="827.3" y1="349.5" x2="821.8" y2="341.1" stroke="#000" stroke-width="1.2"/>
<line x1="822.4" y1="352.8" x2="816.8" y2="344.4" stroke="#000" stroke-width="1.2"/>
<line x1="821.2" y1="351.6" x2="813.4" y2="356.1" stroke="#000" stroke-width="1.2"/>
<line x1="823.4" y1="355.4" x2="815.5" y2="359.9" stroke="#000" stroke-width="1.2"/>
<line x1="825.5" y1="359.3" x2="817.7" y2="363.7" stroke="#000" stroke-width="1.2"/>
<line x1="827.7" y1="363.1" x2="819.9" y2="367.6" stroke="#000" stroke-width="1.2"/>
<line x1="795.1" y1="330.7" x2="784.2" y2="332.5" stroke="#000" stroke-width="1.2"/>
<line x1="795.7" y1="334.7" x2="784.9" y2="336.5" stroke="#000" stroke-width="1.2"/>
<line x1="796.4" y1="338.7" x2="785.5" y2="340.5" stroke="#000" stroke-width="1.2"/>
<line x1="879.0" y1="464.3" x2="883.1" y2="473.5" stroke="#000" stroke-width="1.2"/>
<line x1="912.6" y1="504.2" x2="914.3" y2="512.0" stroke="#000" stroke-width="1.2"/>
<line x1="919.5" y1="502.7" x2="921.2" y2="510.5" stroke="#000" stroke-width="1.2"/>
<line x1="926.3" y1="501.2" x2="928.0" y2="509.0" stroke="#000" stroke-width="1.2"/>
<line x1="913.9" y1="515.9" x2="915.9" y2="523.6" stroke="#000" stroke-width="1.2"/>
<line x1="920.3" y1="514.2" x2="922.3" y2="522.0" stroke="#000" stroke-width="1.2"/>
<line x1="926.6" y1="512.6" x2="928.6" y2="520.3" stroke="#000" stroke-width="1.2"/>
<line x1="995.0" y1="507.7" x2="996.5" y2="515.6" stroke="#000" stroke-width="1.2"/>
<line x1="1003.5" y1="506.0" x2="1005.0" y2="513.9" stroke="#000" stroke-width="1.2"/>
<line x1="1012.0" y1="504.3" x2="1013.5" y2="512.2" stroke="#000" stroke-width="1.2"/>
<line x1="994.5" y1="522.7" x2="996.4" y2="530.5" stroke="#000" stroke-width="1.2"/>
<line x1="1002.5" y1="520.8" x2="1004.3" y2="528.5" stroke="#000" stroke-width="1.2"/>
<line x1="1010.4" y1="518.8" x2="1012.3" y2="526.6" stroke="#000" stroke-width="1.2"/>
<line x1="977.4" y1="498.6" x2="973.2" y2="504.1" stroke="#000" stroke-width="1.2"/>
<line x1="983.9" y1="503.6" x2="979.6" y2="509.1" stroke="#000" stroke-width="1.2"/>
<line x1="990.4" y1="508.6" x2="986.1" y2="514.1" stroke="#000" stroke-width="1.2"/>
<line x1="976.3" y1="511.1" x2="971.7" y2="516.4" stroke="#000" stroke-width="1.2"/>
<line x1="983.4" y1="517.3" x2="978.7" y2="522.6" stroke="#000" stroke-width="1.2"/>
<line x1="990.4" y1="523.5" x2="985.8" y2="528.8" stroke="#000" stroke-width="1.2"/>
<line x1="1036.6" y1="577.5" x2="1037.7" y2="585.4" stroke="#000" stroke-width="1.2"/>
<line x1="1041.6" y1="576.8" x2="1042.7" y2="584.7" stroke="#000" stroke-width="1.2"/>
<line x1="1046.6" y1="576.1" x2="1047.7" y2="584.0" stroke="#000" stroke-width="1.2"/>
<line x1="1051.6" y1="575.4" x2="1052.7" y2="583.4" stroke="#000" stroke-width="1.2"/>
<line x1="1056.6" y1="574.7" x2="1057.7" y2="582.7" stroke="#000" stroke-width="1.2"/>
<line x1="1061.6" y1="574.1" x2="1062.7" y2="582.0" stroke="#000" stroke-width="1.2"/>
<line x1="1088.6" y1="570.4" x2="1089.7" y2="578.3" stroke="#000" stroke-width="1.2"/>
<line x1="1094.0" y1="569.6" x2="1095.1" y2="577.6" stroke="#000" stroke-width="1.2"/>
<line x1="1099.4" y1="568.9" x2="1100.5" y2="576.8" stroke="#000" stroke-width="1.2"/>
<line x1="1104.8" y1="568.2" x2="1105.9" y2="576.1" stroke="#000" stroke-width="1.2"/>
<line x1="1110.3" y1="567.4" x2="1111.3" y2="575.3" stroke="#000" stroke-width="1.2"/>
<line x1="1115.7" y1="566.7" x2="1116.7" y2="574.6" stroke="#000" stroke-width="1.2"/>
<line x1="844.7" y1="487.6" x2="836.7" y2="487.9" stroke="#000" stroke-width="1.2"/>
<line x1="845.3" y1="501.5" x2="837.3" y2="501.8" stroke="#000" stroke-width="1.2"/>
<line x1="845.9" y1="515.4" x2="837.9" y2="515.7" stroke="#000" stroke-width="1.2"/>
<line x1="1039.9" y1="316.5" x2="1043.8" y2="323.5" stroke="#000" stroke-width="1.2"/>
<line x1="1094.5" y1="336.8" x2="1087.6" y2="338.2" stroke="#000" stroke-width="1.2"/>
<polyline points="848.0,511.2 911.2,508.4" fill="none" stroke="#000" stroke-width="1.0"/>
<polyline points="846.5,524.6 912.8,520.1" fill="none" stroke="#000" stroke-width="1.0"/>
<polyline points="944.7,499.8 971.6,498.3 990.1,512.6" fill="none" stroke="#000" stroke-width="1.0"/>
<polyline points="944.7,511.3 970.0,510.0 990.1,527.7" fill="none" stroke="#000" stroke-width="1.0"/>
<polyline points="868.0,311.2 1086.0,349.6" fill="none" stroke="#000" stroke-width="1.3"/>
<polyline points="1114.0,567.6 1240.0,550.4" fill="none" stroke="#000" stroke-width="1.2"/>
<circle cx="787.5" cy="326" r="1.6" fill="#ff8c1a"/>
<circle cx="846" cy="337.5" r="1.6" fill="#ff8c1a"/>
<circle cx="863" cy="313" r="1.6" fill="#ff8c1a"/>
<circle cx="815" cy="349.5" r="1.6" fill="#ff8c1a"/>
<circle cx="980" cy="242" r="1.6" fill="#ff8c1a"/>
<circle cx="986" cy="286" r="1.6" fill="#ff8c1a"/>
<circle cx="1001" cy="303.5" r="1.6" fill="#ff8c1a"/>
<circle cx="1084" cy="296" r="1.6" fill="#ff8c1a"/>
<circle cx="1087" cy="352" r="1.6" fill="#ff8c1a"/>
<circle cx="1072" cy="361" r="1.6" fill="#ff8c1a"/>
<circle cx="1097" cy="367" r="1.6" fill="#ff8c1a"/>
<circle cx="921" cy="450" r="1.6" fill="#ff8c1a"/>
<circle cx="843" cy="526" r="1.6" fill="#ff8c1a"/>
<circle cx="913" cy="522" r="1.6" fill="#ff8c1a"/>
<circle cx="972" cy="497" r="1.6" fill="#ff8c1a"/>
<circle cx="991" cy="529" r="1.6" fill="#ff8c1a"/>
<circle cx="1019" cy="505" r="1.6" fill="#ff8c1a"/>
<circle cx="1002" cy="246" r="1.6" fill="#ff8c1a"/>
<!-- big pipe B1 -->
<path d="M705.5 736.5L1089.8 637.2C1098 635.2 1106 636.5 1111 643C1114 646 1115.2 648 1115.2 649.8L1097.3 663.3L848 736.5Z" fill="url(#gB1)"/>
<path d="M792 736.5L1103.3 649.8" fill="none" stroke="#000" stroke-width="1.5"/>
<path d="M846.4 698C856 700 862 712 859 724C858 729 856.5 733 854.4 735" fill="none" stroke="#000" stroke-width="1.5"/>
<!-- big pipe B2 -->
<path d="M1096.5 662.5L1100 652L1108 645L1115.2 649.8L1171.1 718.5L1179 736.5L1155.5 736.5Z" fill="url(#gB2)"/>
<path d="M1115.2 655L1170.4 722.9" fill="none" stroke="#000" stroke-width="1.4"/>
<path d="M1142.8 684.1C1144 693 1136 699.5 1125.6 698.3" fill="none" stroke="#000" stroke-width="1.3"/>
<!-- elbow rings top -->
<path d="M1089.8 637.2C1100 640 1103 654 1097.3 663.3" fill="none" stroke="#000" stroke-width="1.2"/>
<path d="M1098 636.3C1108 642 1109 655 1101 662.5" fill="none" stroke="#000" stroke-width="1.2"/>
<path d="M1105 637.5C1113 644 1113 654 1106 659.5" fill="none" stroke="#000" stroke-width="1.2"/>
<path d="M1089 637.2C1097 634.5 1106 636 1111 642.5C1114 646 1115.2 648 1115.4 650" fill="none" stroke="#000" stroke-width="1.3"/>
<!-- big pipe B3 -->
<path d="M1167.4 713.2L1203.2 693.1C1210 689.5 1219 692 1223 699C1227 706 1224 714 1216.6 717.7L1177.9 736.5L1170 736.5Z" fill="url(#gB3)"/>
<path d="M1177.9 726.7L1222.6 707.3" fill="none" stroke="#000" stroke-width="1.4"/>
<path d="M1186.8 704.3C1197 705 1203 714 1200.5 722C1199.5 725 1198 727 1195.8 728.2" fill="none" stroke="#000" stroke-width="1.3"/>
<path d="M1203.2 693.1C1210 689.5 1219 692 1223 699C1227 706 1224 714 1216.6 717.7" fill="none" stroke="#000" stroke-width="1.3"/>
<path d="M1209 691.8C1218 695 1222 706 1219 716" fill="none" stroke="#000" stroke-width="1.2"/>
<!-- bottom elbow rings -->
<path d="M1167.4 713.2C1174 718 1178 727 1177.9 736.5" fill="none" stroke="#000" stroke-width="1.3"/>
<path d="M1169.5 717C1172.5 722 1174 730 1172.5 736.5" fill="none" stroke="#000" stroke-width="1.2"/>
<path d="M1171 718.5C1169 728 1162 733 1150 731" fill="none" stroke="#000" stroke-width="1.3"/>


<!-- axis triad -->
<g>
<path d="M678.4 686.1L674.2 655" stroke="#1010f0" stroke-width="3.4" fill="none"/>
<path d="M673.3 648L670.6 657.5L677.6 656.6Z" fill="#1010f0"/>
<path d="M678.4 686L703 685.7" stroke="#f01010" stroke-width="3.4" fill="none"/>
<path d="M710.2 685.6L701.5 681.6L701.6 689.8Z" fill="#e01010"/>
<path d="M678.4 686.3C670 688 664 690.5 659 693.2" stroke="#10b010" stroke-width="3.4" fill="none"/>
<path d="M655.8 694.2L662.5 689.2L663.8 695.6Z" fill="#10d010"/>
<circle cx="678.4" cy="686.1" r="3.3" fill="#fff"/>
<text x="670.3" y="643.8" font-family="Liberation Serif, serif" font-size="12" fill="#fff">Z</text>
<text x="712.3" y="688.3" font-family="Liberation Serif, serif" font-size="12" fill="#fff">X</text>
<text x="652.8" y="691.5" font-family="Liberation Serif, serif" font-size="12" fill="#fff">Y</text>
</g>
</svg>

<!-- TOP SVG: title icon, window controls, logo, toolbar icons -->
<svg class="abs" style="left:0;top:0" width="1454" height="160" viewBox="0 0 1454 160">
<defs>
<linearGradient id="fold" x1="0" y1="0" x2="1" y2="1"><stop offset="0" stop-color="#fffce4"/><stop offset="1" stop-color="#f9de74"/></linearGradient>
<linearGradient id="cubeF" x1="0" y1="0" x2="1" y2="1"><stop offset="0" stop-color="#3f8ef5"/><stop offset="1" stop-color="#0b50c8"/></linearGradient>
<linearGradient id="cubeT" x1="0" y1="0" x2="0" y2="1"><stop offset="0" stop-color="#2f7ef0"/><stop offset="1" stop-color="#1e6be6"/></linearGradient>
<linearGradient id="drvT" x1="0" y1="0" x2="1" y2="1"><stop offset="0" stop-color="#ececec"/><stop offset="1" stop-color="#b8b8b8"/></linearGradient>
<linearGradient id="drvL" x1="0" y1="0" x2="0" y2="1"><stop offset="0" stop-color="#d8d8d8"/><stop offset="1" stop-color="#ababab"/></linearGradient>
<linearGradient id="drvR" x1="0" y1="0" x2="1" y2="0"><stop offset="0" stop-color="#a8a8a8"/><stop offset="1" stop-color="#868686"/></linearGradient>
<radialGradient id="star" cx="0.5" cy="0.5" r="0.5"><stop offset="0" stop-color="#fff"/><stop offset="0.15" stop-color="#ffe9a0"/><stop offset="0.38" stop-color="#ffa610"/><stop offset="0.68" stop-color="#ffb830" stop-opacity="0.85"/><stop offset="1" stop-color="#ffd060" stop-opacity="0"/></radialGradient>
<linearGradient id="page" x1="0" y1="0" x2="1" y2="1"><stop offset="0" stop-color="#fff"/><stop offset="0.6" stop-color="#fff"/><stop offset="1" stop-color="#e4ecf8"/></linearGradient>
<linearGradient id="undo" x1="0" y1="0" x2="0" y2="1"><stop offset="0" stop-color="#9ccaf6"/><stop offset="1" stop-color="#d2e6fb"/></linearGradient>
<linearGradient id="gear" x1="0" y1="0" x2="0" y2="1"><stop offset="0" stop-color="#dcdcf2"/><stop offset="0.6" stop-color="#bcbcdf"/><stop offset="1" stop-color="#8c8cc0"/></linearGradient>
<linearGradient id="abF" x1="0" y1="0" x2="1" y2="1"><stop offset="0" stop-color="#c4e2fb"/><stop offset="1" stop-color="#3a8de0"/></linearGradient>
<linearGradient id="ayF" x1="0" y1="0" x2="1" y2="1"><stop offset="0" stop-color="#fdf4b0"/><stop offset="1" stop-color="#e8c63c"/></linearGradient>
<linearGradient id="agF" x1="0" y1="0" x2="1" y2="1"><stop offset="0" stop-color="#3fa624"/><stop offset="1" stop-color="#78d058"/></linearGradient>
<radialGradient id="helpg" cx="0.4" cy="0.3" r="0.8"><stop offset="0" stop-color="#6cc838"/><stop offset="1" stop-color="#1f9410"/></radialGradient>
<linearGradient id="helpr" x1="0" y1="0" x2="0" y2="1"><stop offset="0" stop-color="#f4f4f4"/><stop offset="1" stop-color="#9a9a9a"/></linearGradient>
<linearGradient id="bub" x1="0" y1="0" x2="1" y2="1"><stop offset="0" stop-color="#fff"/><stop offset="0.5" stop-color="#f0f0ff"/><stop offset="1" stop-color="#c0c0f0"/></linearGradient>
<linearGradient id="scr" x1="0" y1="0" x2="1" y2="1"><stop offset="0" stop-color="#4a6cf0"/><stop offset="0.5" stop-color="#1a3ae0"/><stop offset="1" stop-color="#0414a0"/></linearGradient>
<linearGradient id="door" x1="0" y1="0" x2="1" y2="1"><stop offset="0" stop-color="#9494cc"/><stop offset="1" stop-color="#6464a4"/></linearGradient>
<linearGradient id="sky" x1="0" y1="0" x2="0" y2="1"><stop offset="0" stop-color="#9fd0f8"/><stop offset="0.45" stop-color="#fff"/><stop offset="0.62" stop-color="#f8ec80"/><stop offset="0.68" stop-color="#58c020"/><stop offset="1" stop-color="#3aa010"/></linearGradient>
<linearGradient id="vblue" x1="0" y1="0" x2="0" y2="1"><stop offset="0" stop-color="#5cb0f0"/><stop offset="0.5" stop-color="#2f88d8"/><stop offset="1" stop-color="#3a9ae6"/></linearGradient>
</defs>
<!-- title icon -->
<g>
<rect x="16" y="7" width="16" height="1" fill="#cfcfcf"/><rect x="16" y="22" width="16" height="1" fill="#cfcfcf"/>
<path d="M16 10.2L17.6 11.8L19.2 10.2" stroke="#222" stroke-width="0.9" fill="none"/>
<rect x="19.5" y="10.3" width="12" height="1.5" fill="#6c9cd8"/>
<path d="M16 15.5C19 12.5 22 13.5 24.5 15.5S29 17.5 32 14.2V17.6C29 20.5 26.5 19.5 24 18S19 16 16 18.8Z" fill="#45b0ee"/>
<path d="M16 18.3C19 15.6 21.5 16.5 24 18S29 20 32 17.2V18.2C29 21 26.5 20.2 24 18.7S19 16.8 16 19.4Z" fill="#2a6aa8"/>
</g>
<!-- window controls -->
<g stroke="#000" stroke-width="1" fill="none">
<path d="M1260 11.5H1271M1260.5 11.5L1263 9M1260.5 11.5L1263 14M1270.5 11.5L1268 9M1270.5 11.5L1268 14" stroke-width="1.3"/>
<path d="M1327 15.5H1337"/>
<rect x="1372.5" y="10.5" width="9" height="9"/>
<path d="M1418 10L1428 20M1428 10L1418 20" stroke-width="1.1"/>
</g>
<!-- LOGO -->
<g>
<path d="M38.8 62.2L55.6 85.6C57.5 87.8 60.5 87.8 62 85.6L78.6 62.2" fill="none" stroke="#0a0a0a" stroke-width="6.2" stroke-linecap="round" stroke-linejoin="round"/>
<text x="68.2" y="85.4" font-family="Liberation Sans, sans-serif" font-size="22" textLength="132" lengthAdjust="spacingAndGlyphs" fill="url(#vblue)" stroke="#3a8edc" stroke-width="1.1" stroke-linejoin="round">TUBE</text>
<rect x="60" y="100.6" width="149" height="1" fill="#4a86d8"/>
<text x="67.5" y="113.4" font-family="Liberation Sans, sans-serif" font-size="27.5" textLength="133" lengthAdjust="spacingAndGlyphs" fill="#0a0a0a">STEP</text>
<circle cx="58.4" cy="101.1" r="3" fill="#c8c8c8" stroke="#8a8a8a" stroke-width="0.8"/>
</g>
<!-- Load Project -->
<g>
<path d="M263.7 59.4H281.8L283.5 54.1H295L296.8 56.5V93L264.7 95Z" fill="url(#fold)" stroke="#d8a21c" stroke-width="1"/>
<path d="M253.1 67.6L263.9 67.1L264.8 94.6L262.3 95.5Z" fill="#fbe98c" stroke="#d8a21c" stroke-width="1"/>
<path d="M266 64.5L286 63.5L288 66V92H266Z" fill="#fdf0a0" opacity="0.9"/>
<g>
<path d="M273.8 71.5L283 68.1L291.7 70.8L291.5 79.5L283.3 83.2L274.2 80Z" fill="url(#cubeF)"/>
<path d="M273.8 71.5L283 68.1L291.7 70.8L283.2 74.2Z" fill="#3f8cf6"/>
<path d="M283.2 74.2L291.7 70.8L291.5 79.5L283.3 83.2Z" fill="#0a44b4"/>
</g>
<g>
<path d="M268.1 83.6L275 80.3L281.1 82.6L281 91.6L274.6 95.5L268.3 92.2Z" fill="url(#cubeF)"/>
<path d="M274.8 86L281.1 82.6L281 91.6L274.6 95.5Z" fill="#0a44b4"/>
<path d="M268.1 83.6L275 80.3L281.1 82.6L274.8 86Z" fill="#3f8cf6"/>
</g>
<g>
<path d="M281.3 84.6L289 81.2L297.9 84L297.5 92.8L290.4 97.4L281.4 93.4Z" fill="url(#cubeF)"/>
<path d="M290.2 87.6L297.9 84L297.5 92.8L290.4 97.4Z" fill="#0a44b4"/>
<path d="M281.3 84.6L289 81.2L297.9 84L290.2 87.6Z" fill="#3f8cf6"/>
</g>
</g>
<!-- Save drive -->
<g>
<path d="M329.7 62.6Q330 61 332 60.6L349 58.3Q350.5 58.2 352 58.8L373 67.8Q374.8 68.8 374.4 70.5L373 81.6Q372.8 83 371 83.8L351 91.2Q349.3 91.6 348 90.6L331 71.5Q330 70.5 329.9 69Z" fill="#9c9c9c"/>
<path d="M329.9 62.5L349.8 58.4L374.3 69L349 77.2Z" fill="url(#drvT)"/>
<path d="M329.9 62.5L349 77.2V91.2L330.3 70.2Z" fill="url(#drvL)"/>
<path d="M349 77.2L374.3 69L373 81.6L349 91.2Z" fill="url(#drvR)"/>
<path d="M330.2 66.5L349 82.5L373.6 74.5" fill="none" stroke="#777" stroke-width="0.8"/>
<path d="M335 64L341 67L345 65.5M353 66L360 71.5" stroke="#f4f4f4" stroke-width="0.9" fill="none" opacity="0.9"/>
</g>
<g transform="translate(76.7 0)">
<path d="M329.7 62.6Q330 61 332 60.6L349 58.3Q350.5 58.2 352 58.8L373 67.8Q374.8 68.8 374.4 70.5L373 81.6Q372.8 83 371 83.8L351 91.2Q349.3 91.6 348 90.6L331 71.5Q330 70.5 329.9 69Z" fill="#9c9c9c"/>
<path d="M329.9 62.5L349.8 58.4L374.3 69L349 77.2Z" fill="url(#drvT)"/>
<path d="M329.9 62.5L349 77.2V91.2L330.3 70.2Z" fill="url(#drvL)"/>
<path d="M349 77.2L374.3 69L373 81.6L349 91.2Z" fill="url(#drvR)"/>
<path d="M330.2 66.5L349 82.5L373.6 74.5" fill="none" stroke="#777" stroke-width="0.8"/>
<path d="M335 64L341 67L345 65.5M353 66L360 71.5" stroke="#f4f4f4" stroke-width="0.9" fill="none" opacity="0.9"/>
</g>
<path d="M437.9 78.4H445.7V84H451.7V91.7H445.7V97.5H437.9V91.7H432.4V84H437.9Z" fill="#62d43c" stroke="#1c8a12" stroke-width="1"/>
<path d="M439 79.5H444.6V85.1H450.6V87.5H433.5V85.1H439Z" fill="#9aea74" opacity="0.8"/>
<!-- Clear page -->
<path d="M488.5 52.5H510.6L523.4 65V97.2H488.5Z" fill="url(#page)" stroke="#8c96a6" stroke-width="1"/>
<path d="M510.6 52.5L513 56.5L523.4 65" fill="none" stroke="#8c96a6" stroke-width="0.8"/>
<circle cx="517.9" cy="62.8" r="12" fill="url(#star)"/>
<path d="M511.5 56.5L524.3 69.1M524.3 56.5L511.5 69.1" stroke="#fff6d0" stroke-width="1" opacity="0.95"/>
<!-- Undo -->
<path d="M560.6 59.3Q560.3 57.6 562 58.3L569.8 66.2C574 58 582 49 591.4 48.7C600 48.6 606 55 605.8 64C605.6 70 604 75.5 602.4 79.2Q601.8 79.8 601.6 79C602.5 73 602 67 599.5 62.5C597 58 592.5 56 588 57.5C584 59 580.5 64.5 578.9 70.8L587.6 71.6Q589.8 72.6 588 74.2L567 83.2Q565.3 83.7 565 82Z" fill="url(#undo)" stroke="#9cc6f0" stroke-width="0.8"/>
<!-- Gear -->
<g transform="translate(659.8 73.9)">
<path id="gearp" fill="url(#gear)" stroke="#8686ba" stroke-width="0.9" stroke-linejoin="round" d="M-7.0 -14.3L-7.6 -19.8L-2.8 -21.0L-0.7 -15.9L3.0 -15.6L5.8 -20.4L10.3 -18.6L8.9 -13.2L11.8 -10.9L16.9 -13.2L19.5 -9.1L15.2 -5.6L16.1 -2.1L21.6 -0.9L21.2 3.9L15.6 4.2L14.2 7.6L18.0 11.7L14.9 15.4L10.1 12.4L7.0 14.3L7.6 19.8L2.8 21.0L0.7 15.9L-3.0 15.6L-5.8 20.4L-10.3 18.6L-8.9 13.2L-11.8 10.9L-16.9 13.2L-19.5 9.1L-15.2 5.6L-16.1 2.1L-21.6 0.9L-21.2 -3.9L-15.6 -4.2L-14.2 -7.6L-18.0 -11.7L-14.9 -15.4L-10.1 -12.4Z"/>
<circle r="11.5" fill="none" stroke="#e4e4f6" stroke-width="0.9" opacity="0.9"/>
<circle r="5.3" fill="#f4f7fc" stroke="#7c7cb4" stroke-width="1.2"/>
</g>
<!-- Assembly cubes -->
<g>
<path d="M705.1 83L718.6 77.7L733.5 84.4L726.8 87.3Z" fill="#e8d060"/>
<path d="M705.1 83L726.8 87.3L726.3 110.9L706.6 106.1Z" fill="url(#ayF)" stroke="#b8962a" stroke-width="0.7"/>
<path d="M726.8 87.3L733.5 84.4V105.6L726.3 110.9Z" fill="#b4942a"/>
<path d="M733.5 86.4L752.8 78.7L765.8 80.6L754.7 87.3Z" fill="#3c9c20"/>
<path d="M733.5 85.5L754.7 87.3L755.2 111.4L733.5 106.6Z" fill="url(#agF)" stroke="#2c8414" stroke-width="0.7"/>
<path d="M754.7 87.3L765.8 80.6L765.3 103.7L755.2 111.4Z" fill="#2e8a14"/>
<path d="M742 91L753 92.5L753.5 101Z" fill="#8cdc6c" opacity="0.8"/>
<path d="M718.6 58.4L732.6 54.1L752.8 56.5L740.3 61.3Z" fill="#3a90e4"/>
<path d="M718.6 58.4L740.3 61.3V85.9L719.6 82Z" fill="url(#abF)" stroke="#2a78cc" stroke-width="0.7"/>
<path d="M740.3 61.3L752.8 56.5L752.6 78.7L740.3 85.9Z" fill="#1b5c94"/>
</g>
<!-- I-beam -->
<path d="M805.7 77.2H820.2V81.1H815.4V108H820.2V111.9H805.7V108H811V81.1H805.7Z" fill="#444"/>
<!-- Help -->
<circle cx="890.8" cy="82.8" r="13.7" fill="url(#helpr)" stroke="#8e8e8e" stroke-width="0.6"/>
<circle cx="890.8" cy="82.8" r="10.9" fill="url(#helpg)" stroke="#1a7a0c" stroke-width="0.6"/>
<text x="890.8" y="90.2" text-anchor="middle" font-family="Liberation Sans, sans-serif" font-weight="bold" font-size="20" fill="#fff">?</text>
<!-- About -->
<path d="M967.8 60.4C976 60.4 982.7 65.4 982.7 71.7C982.7 75.8 979.8 79 976.5 81C975 85 972 88 967.4 89.5C969.5 87 970.3 84.6 970 82.9C969.3 83 968.6 83 967.8 83C959.6 83 952.9 78 952.9 71.7C952.9 65.4 959.6 60.4 967.8 60.4Z" fill="url(#bub)" stroke="#9494cc" stroke-width="0.9"/>
<text x="967.8" y="78.8" text-anchor="middle" font-family="Liberation Serif, serif" font-weight="bold" font-size="21" fill="#1a5cd8" stroke="#1a5cd8" stroke-width="0.5">i</text>
<!-- Switch Screens -->
<g>
<path d="M1296.6 91.5C1302 88 1312 86.5 1318 88L1327.4 90.2C1326 94 1322 97 1318.7 97.4C1313 92.5 1303 91.8 1297 93.2Z" fill="#d6d6d6" stroke="#9a9a9a" stroke-width="0.7"/>
<path d="M1308 84L1318.5 86.2L1318 90H1309Z" fill="#c4c4c4"/>
<path d="M1297 53.1L1334.6 54.1L1332.2 88.3L1294.1 81.1Z" fill="#e0e0e0" stroke="#7c7c7c" stroke-width="1" stroke-linejoin="round"/>
<path d="M1299.4 56L1331.7 57L1329.3 84.9L1297 78.7Z" fill="url(#scr)"/>
<path d="M1304 56.2L1307.5 56.3L1322 82.5L1318 82Z" fill="#7c98f8" opacity="0.7"/>
<path d="M1309 56.4L1313 56.5L1325.5 80L1323 80.5Z" fill="#7c98f8" opacity="0.55"/>
<path d="M1320 56.7L1331.7 57L1330 78Z" fill="#6c88f4" opacity="0.6"/>
</g>
<!-- Close VTube -->
<g>
<path d="M1378.4 52.7H1411.1V89.3L1379.8 93.1Z" fill="#8a8a8a" stroke="#6a6a6a" stroke-width="0.8"/>
<rect x="1383.2" y="57.5" width="8" height="33.5" fill="url(#sky)"/>
<path d="M1390 56L1410.2 54.1V89.3L1390.4 97.4Z" fill="url(#door)" stroke="#5c5c9c" stroke-width="0.8"/>
<path d="M1395.7 59.9L1407.3 58.4V64.2L1395.7 66.1Z" fill="#e4e4ff"/>
<circle cx="1397.2" cy="77.7" r="2.8" fill="#e2e2e2" stroke="#8a8a9a" stroke-width="0.5"/>
</g>
</svg>


<!-- TEXT -->
<span class="t" style="left:36.8px;top:10px;font-size:12px;color:#000;letter-spacing:-0.18px;">VTube</span>
<span class="t" style="left:261.4px;top:105px;font-size:13.4px;color:#3b3b3b;letter-spacing:-1.17px;">Load</span>
<span class="t" style="left:254.6px;top:121px;font-size:13.4px;color:#3b3b3b;letter-spacing:-0.31px;">Project</span>
<span class="t" style="left:337.2px;top:105px;font-size:13.4px;color:#3b3b3b;letter-spacing:-1.01px;">Save</span>
<span class="t" style="left:331.1px;top:121px;font-size:13.4px;color:#3b3b3b;letter-spacing:-0.31px;">Project</span>
<span class="t" style="left:399.8px;top:105px;font-size:13.4px;color:#3b3b3b;letter-spacing:-0.42px;">Save As...</span>
<span class="t" style="left:408.1px;top:121px;font-size:13.4px;color:#3b3b3b;letter-spacing:-0.31px;">Project</span>
<span class="t" style="left:490.4px;top:105px;font-size:13.4px;color:#3b3b3b;letter-spacing:-0.67px;">Clear</span>
<span class="t" style="left:485.1px;top:121px;font-size:13.4px;color:#3b3b3b;letter-spacing:-0.31px;">Project</span>
<span class="t" style="left:567.8px;top:96px;font-size:13.4px;color:#a9afb9;letter-spacing:-1.01px;">Undo</span>
<span class="t" style="left:558.1px;top:112px;font-size:13.4px;color:#a9afb9;letter-spacing:-0.54px;">Previous</span>
<span class="t" style="left:561.0px;top:128px;font-size:13.4px;color:#a9afb9;letter-spacing:-0.88px;">Change</span>
<span class="t" style="left:638.6px;top:105px;font-size:13.4px;color:#3b3b3b;letter-spacing:-0.67px;">System</span>
<span class="t" style="left:637.6px;top:121px;font-size:13.4px;color:#3b3b3b;letter-spacing:-0.48px;">Options</span>
<span class="t" style="left:709.0px;top:121px;font-size:13.4px;color:#3b3b3b;letter-spacing:-0.65px;">Assembly</span>
<span class="t" style="left:878.0px;top:105px;font-size:13.4px;color:#3b3b3b;letter-spacing:-1.02px;">Help</span>
<span class="t" style="left:950.6px;top:97px;font-size:13.4px;color:#3b3b3b;letter-spacing:-0.38px;">About</span>
<span class="t" style="left:948.9px;top:113px;font-size:13.4px;color:#3b3b3b;letter-spacing:-0.49px;">VTube</span>
<span class="t" style="left:1298.3px;top:105px;font-size:13.4px;color:#3b3b3b;letter-spacing:-0.49px;">Switch</span>
<span class="t" style="left:1294.0px;top:121px;font-size:13.4px;color:#3b3b3b;letter-spacing:-0.57px;">Screens</span>
<span class="t" style="left:1379.0px;top:105px;font-size:13.4px;color:#3b3b3b;letter-spacing:-0.94px;">Close</span>
<span class="t" style="left:1375.9px;top:121px;font-size:13.4px;color:#3b3b3b;letter-spacing:-0.57px;">VTube</span>
<span class="t" style="left:37.0px;top:212px;font-size:13.4px;color:#222;letter-spacing:-1.20px;">File</span>
<span class="t" style="left:67.0px;top:212px;font-size:13.4px;color:#222;letter-spacing:-0.93px;">Control</span>
<span class="t" style="left:115.0px;top:212px;font-size:13.4px;color:#222;letter-spacing:-1.20px;">Help</span>
<span class="t" style="left:668.0px;top:170px;font-size:16.3px;color:#3a3a3a;letter-spacing:0.03px;">View Mode: ORBIT, Projection: PERSPECTIVE, Wire Frame: ON, Only UNBENT Tube: OFF, Tube</span>
<span class="t" style="left:668.0px;top:191px;font-size:16.3px;color:#3a3a3a;letter-spacing:0.13px;">Defining Features: VISIBLE, Auto Zoom: OFF</span>
<span class="t" style="left:20.0px;top:247px;font-size:13.4px;color:#444;letter-spacing:-0.39px;">Displayed in UI:</span>
<span class="t" style="left:118.0px;top:247px;font-size:13.4px;color:#000;letter-spacing:-0.41px;">Block 7 - TH2 - LT Bottom - JGK_2_L2_K.txt</span>
<span class="t" style="left:104.0px;top:285px;font-size:26.8px;color:#4a4444;letter-spacing:-0.22px;">Parametric Tube Data</span>
<span class="t" style="left:23.5px;top:326px;font-size:13.4px;color:#222;letter-spacing:-0.84px;">Main</span>
<span class="t" style="left:63.5px;top:328px;font-size:13.4px;color:#222;letter-spacing:-0.67px;">Bend Setup</span>
<span class="t" style="left:136.5px;top:328px;font-size:13.4px;color:#222;letter-spacing:-0.44px;">SolidWorks</span>
<span class="t" style="left:208.3px;top:328px;font-size:13.4px;color:#222;letter-spacing:-0.94px;">Unbend</span>
<span class="t" style="left:259.3px;top:328px;font-size:13.4px;color:#222;letter-spacing:-0.16px;">Transform</span>
<span class="t" style="left:21.5px;top:363px;font-size:13.4px;color:#3a3a3a;letter-spacing:-0.55px;">Point Count</span>
<span class="t" style="left:95.0px;top:362px;font-size:16px;color:#000;letter-spacing:0.20px;">20</span>
<span class="t" style="left:375.5px;top:367px;font-size:13.4px;color:#3a3a48;letter-spacing:-0.80px;text-shadow:0 0 4px #b8cdf0,0 0 6px #c8d8f4;">Set</span>
<span class="t" style="left:208.3px;top:410px;font-size:13.4px;color:#3a3a48;letter-spacing:-0.27px;text-shadow:0 0 4px #b8cdf0,0 0 6px #c8d8f4;">Clear All</span>
<span class="t" style="left:49.0px;top:449px;font-size:13.4px;color:#3a3a48;letter-spacing:-0.37px;text-shadow:0 0 4px #b8cdf0,0 0 6px #c8d8f4;">Resynchronize Radii to Default</span>
<span class="t" style="left:292.0px;top:449px;font-size:13.4px;color:#3a3a48;letter-spacing:-0.31px;text-shadow:0 0 4px #b8cdf0,0 0 6px #c8d8f4;">Reset Origin to Zero</span>
<span class="t" style="left:22.5px;top:493px;font-size:11px;color:#3a3a44;letter-spacing:-0.30px;">Centerline XYZ Data</span>
<span class="t" style="left:334.3px;top:495px;font-size:13.4px;color:#3a3a3a;letter-spacing:-0.70px;">Lock Grids</span>
<span class="t" style="left:23.5px;top:534px;font-size:11px;color:#111;">Pnt</span>
<span class="t" style="left:79.0px;top:534px;font-size:11px;color:#111;">X</span>
<span class="t" style="left:162.0px;top:534px;font-size:11px;color:#111;">Y</span>
<span class="t" style="left:245.0px;top:534px;font-size:11px;color:#111;">Z</span>
<span class="t" style="left:327.5px;top:534px;font-size:11px;color:#111;letter-spacing:-0.49px;">Radius</span>
<span class="t" style="left:24.5px;top:558px;font-size:12.9px;color:#000;">1</span>
<span class="t" style="left:79.5px;top:558px;font-size:12.9px;color:#000;letter-spacing:-0.44px;">0.000</span>
<span class="t" style="left:162.5px;top:558px;font-size:12.9px;color:#000;letter-spacing:-0.44px;">0.000</span>
<span class="t" style="left:245.5px;top:558px;font-size:12.9px;color:#000;letter-spacing:-0.44px;">0.000</span>
<span class="t" style="left:24.5px;top:580px;font-size:12.9px;color:#000;">2</span>
<span class="t" style="left:79.5px;top:580px;font-size:12.9px;color:#000;letter-spacing:-0.44px;">0.000</span>
<span class="t" style="left:162.5px;top:580px;font-size:12.9px;color:#000;letter-spacing:-0.44px;">3.580</span>
<span class="t" style="left:245.5px;top:580px;font-size:12.9px;color:#000;letter-spacing:-0.44px;">0.000</span>
<span class="t" style="left:328.3px;top:580px;font-size:12.9px;color:#000;letter-spacing:-0.44px;">0.563</span>
<span class="t" style="left:24.5px;top:602px;font-size:12.9px;color:#000;">3</span>
<span class="t" style="left:79.5px;top:602px;font-size:12.9px;color:#000;letter-spacing:-0.44px;">0.680</span>
<span class="t" style="left:162.5px;top:602px;font-size:12.9px;color:#000;letter-spacing:-0.44px;">3.580</span>
<span class="t" style="left:245.5px;top:602px;font-size:12.9px;color:#000;letter-spacing:-0.11px;">-1.500</span>
<span class="t" style="left:328.3px;top:602px;font-size:12.9px;color:#000;letter-spacing:-0.44px;">0.563</span>
<span class="t" style="left:24.5px;top:624px;font-size:12.9px;color:#000;">4</span>
<span class="t" style="left:79.5px;top:624px;font-size:12.9px;color:#000;letter-spacing:-0.44px;">0.680</span>
<span class="t" style="left:162.5px;top:624px;font-size:12.9px;color:#000;letter-spacing:-0.44px;">3.580</span>
<span class="t" style="left:245.5px;top:624px;font-size:12.9px;color:#000;letter-spacing:-0.07px;">-10.387</span>
<span class="t" style="left:328.3px;top:624px;font-size:12.9px;color:#000;letter-spacing:-0.44px;">0.563</span>
<span class="t" style="left:24.5px;top:646px;font-size:12.9px;color:#000;">5</span>
<span class="t" style="left:79.5px;top:646px;font-size:12.9px;color:#000;letter-spacing:-0.44px;">0.680</span>
<span class="t" style="left:162.5px;top:646px;font-size:12.9px;color:#000;letter-spacing:-0.44px;">3.265</span>
<span class="t" style="left:245.5px;top:646px;font-size:12.9px;color:#000;letter-spacing:0.09px;">-11.597</span>
<span class="t" style="left:328.3px;top:646px;font-size:12.9px;color:#000;letter-spacing:-0.44px;">0.563</span>
<span class="t" style="left:23.5px;top:680px;font-size:13.4px;color:#111;letter-spacing:-0.48px;">Incremental LRA</span>
<span class="t" style="left:125.5px;top:683px;font-size:13.4px;color:#a2a2a2;letter-spacing:-0.55px;">Springback Compensated LRA</span>
<span class="t" style="left:304.3px;top:683px;font-size:13.4px;color:#a2a2a2;letter-spacing:-0.67px;">Absolute LRA</span>
<span class="t" style="left:118.0px;top:714px;font-size:13.4px;color:#3a3a48;letter-spacing:-0.43px;text-shadow:0 0 4px #b8cdf0,0 0 6px #c8d8f4;">Reverse Calc XYZ from Incremental LRA</span>
<span class="t" style="left:502.2px;top:304px;font-size:13.4px;color:#3b3b3b;letter-spacing:-0.11px;">Import/Export</span>
<span class="t" style="left:488.0px;top:360px;font-size:13.4px;color:#3b3b3b;letter-spacing:-0.38px;">Collected Features</span>
<span class="t" style="left:507.3px;top:409px;font-size:13.4px;color:#3b3b3b;letter-spacing:-0.42px;">Constructed</span>
<span class="t" style="left:516.0px;top:425px;font-size:13.4px;color:#3b3b3b;letter-spacing:-0.41px;">Features</span>
<span class="t" style="left:510.8px;top:473px;font-size:13.4px;color:#3b3b3b;letter-spacing:-0.36px;">Part Setup</span>
<span class="t" style="left:495.3px;top:521px;font-size:13.4px;color:#fff;letter-spacing:-0.25px;">Parametric Tube</span>
<span class="t" style="left:529.7px;top:537px;font-size:13.4px;color:#fff;letter-spacing:-1.10px;">Data</span>
<span class="t" style="left:500.0px;top:584px;font-size:13.4px;color:#3b3b3b;letter-spacing:-0.43px;">Bender Output</span>
<span class="t" style="left:519.0px;top:640px;font-size:13.4px;color:#3b3b3b;letter-spacing:-0.32px;">Reports</span>
<span class="t" style="left:632.0px;top:744px;font-size:13.4px;color:#333;letter-spacing:-0.22px;">Location: 58.207, 65.481, 0.000</span>
<span class="t" style="left:1061.0px;top:745px;font-size:13.4px;color:#333;letter-spacing:-0.34px;">Loop Activity in Math Engine:  0</span>
<span class="t" style="left:1279.0px;top:288px;font-size:13.4px;color:#000;letter-spacing:-0.33px;">F2 - Refresh</span>
<span class="t" style="left:1279.0px;top:305px;font-size:13.4px;color:#000;letter-spacing:-0.39px;">Parametric Graphics</span>
<span class="t" style="left:1279.0px;top:327px;font-size:13.4px;color:#000;letter-spacing:-0.28px;">F3 - Zoom All</span>
<span class="t" style="left:1279.0px;top:349px;font-size:13.4px;color:#000;letter-spacing:-0.22px;">F4 - VPort: Select</span>
<span class="t" style="left:1279.0px;top:371px;font-size:13.4px;color:#000;letter-spacing:-0.16px;">F5 - VPort: Orbit</span>
<span class="t" style="left:1279.0px;top:393px;font-size:13.4px;color:#000;letter-spacing:-0.33px;">F6 - VPort: Pan</span>
<span class="t" style="left:1279.0px;top:415px;font-size:13.4px;color:#000;letter-spacing:-0.25px;">F7 - VPort: Zoom Win</span>
<span class="t" style="left:1279.0px;top:437px;font-size:13.4px;color:#000;letter-spacing:-0.27px;">Set Orientation</span>
<span class="t" style="left:1279.0px;top:459px;font-size:13.4px;color:#000;letter-spacing:-0.23px;">Ctrl-F2 - Auto Zoom</span>
<span class="t" style="left:1279.0px;top:487px;font-size:13.4px;color:#000;letter-spacing:-0.50px;">Perspective Mode</span>
<span class="t" style="left:1281.5px;top:587px;font-size:13.4px;color:#000;letter-spacing:-0.42px;">Add to Collected</span>
<span class="t" style="left:1281.5px;top:603px;font-size:13.4px;color:#000;letter-spacing:-0.45px;">Features</span>
<span class="t" style="left:1281.5px;top:625px;font-size:13.4px;color:#000;letter-spacing:-0.36px;">Rebuild Parametric</span>
<span class="t" style="left:1341.2px;top:254px;font-size:16.5px;color:#969696;letter-spacing:0.27px;">Viewport</span>
<span class="t" style="left:1292.5px;top:550px;font-size:16.5px;color:#969696;letter-spacing:-0.10px;">Feature Models</span>
<span class="t" style="left:1284.0px;top:662px;font-size:16.5px;color:#969696;letter-spacing:-0.09px;">Parametric Model</span>
<span class="t" style="left:1286.4px;top:704px;font-size:16.5px;color:#969696;letter-spacing:0.12px;">Imported Models</span>
<span class="t" style="left:1298.0px;top:746px;font-size:16.5px;color:#969696;letter-spacing:0.24px;">Other Actions</span>
<span class="t" style="left:12.5px;top:781px;font-size:12.9px;color:#fff;letter-spacing:-0.51px;">Entity Count: 0, Undo Count: 0, Undo Memory: 23 kb</span>
<span class="t" style="left:563.0px;top:781px;font-size:12.9px;color:#fff;letter-spacing:-0.40px;">Timer - Orientation: Off, SmartInspect Logging: Off</span>
<span class="t" style="left:962.5px;top:781px;font-size:12.9px;color:#fff;letter-spacing:-0.77px;">Licensed User: Michael Cone, Local USB License OK</span>
</div>
</body></html>
